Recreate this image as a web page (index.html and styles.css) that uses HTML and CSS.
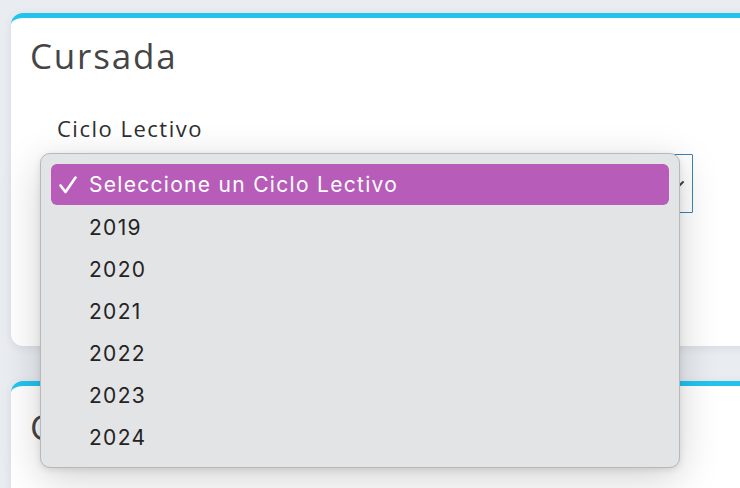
FILE: index.html
```html
<!DOCTYPE html>
<html lang="es">
<head>
<meta charset="utf-8">
<title>Cursada</title>
<link rel="stylesheet" href="styles.css">
</head>
<body>
<div class="page">
  <section class="card card-first">
    <h2 class="card-title">Cursada</h2>
    <div class="form-group">
      <label class="form-label">Ciclo Lectivo</label>
      <div class="select">
        <span class="select-value">Seleccione un Ciclo Lectivo</span>
        <svg class="select-chevron" width="16" height="12" viewBox="0 0 16 12"><path d="M2 3 L8 9 L14 3" fill="none" stroke="#444" stroke-width="2" stroke-linecap="round"/></svg>
      </div>
    </div>
  </section>
  <section class="card card-second">
    <h2 class="card-title">Comisiones</h2>
  </section>
</div>

<div class="menu">
  <div class="menu-item selected">
    <svg class="check" width="20" height="20" viewBox="0 0 20 20"><path d="M2.5 10.5 L7.5 17 L17.5 2.5" fill="none" stroke="#fff" stroke-width="2.6" stroke-linecap="round" stroke-linejoin="round"/></svg>
    <span>Seleccione un Ciclo Lectivo</span>
  </div>
  <div class="menu-item"><span>2019</span></div>
  <div class="menu-item"><span>2020</span></div>
  <div class="menu-item"><span>2021</span></div>
  <div class="menu-item"><span>2022</span></div>
  <div class="menu-item"><span>2023</span></div>
  <div class="menu-item"><span>2024</span></div>
</div>
</body>
</html>
```

FILE: styles.css
```css
html, body {
  margin: 0;
  padding: 0;
  height: 100%;
  overflow: hidden;
}
body {
  background: #e9ecf1;
  font-family: "Open Sans", "Noto Sans", sans-serif;
  position: relative;
}
.page {
  padding: 13px 0 0 11px;
  display: flex;
  flex-direction: column;
  gap: 35px;
}
.card {
  background: #fff;
  border-top: 5px solid #22c4ee;
  border-radius: 12px;
  box-shadow: 0 2px 10px rgba(0, 0, 0, 0.08);
  width: 780px;
  box-sizing: border-box;
}
.card-first {
  height: 333px;
}
.card-second {
  height: 200px;
}
.card-title {
  margin: 0;
  padding: 16px 0 0 19px;
  font-family: "Open Sans", sans-serif;
  font-weight: 400;
  font-size: 35px;
  line-height: 44px;
  color: #454545;
  letter-spacing: 1.8px;
}
.card-second .card-title {
  padding-top: 19px;
}
.form-group {
  padding: 35px 0 0 46px;
}
.form-label {
  display: block;
  font-family: "Open Sans", sans-serif;
  font-weight: 500;
  font-size: 22px;
  line-height: 30px;
  letter-spacing: 1.5px;
  color: #2e2e2e;
}
.select {
  margin-top: 11px;
  width: 636px;
  height: 59px;
  box-sizing: border-box;
  border: 1px solid #3b82b8;
  border-radius: 1px;
  display: flex;
  align-items: center;
  justify-content: space-between;
  padding: 0 6px 0 16px;
  color: #444;
  font-size: 18px;
}
.select-chevron {
  display: block;
  margin-right: 1px;
  margin-top: 2px;
}
.menu {
  position: absolute;
  left: 40px;
  top: 153px;
  width: 640px;
  height: 315px;
  box-sizing: border-box;
  background: #e3e4e6;
  border: 1px solid #b8b8ba;
  border-radius: 10px;
  box-shadow: 0 10px 40px rgba(0, 0, 0, 0.18), 0 2px 6px rgba(0, 0, 0, 0.1);
  padding: 10px 10px;
  display: flex;
  flex-direction: column;
}
.menu-item {
  height: 42px;
  flex: none;
  display: flex;
  align-items: center;
  padding-left: 38px;
  font-family: "Inter", "Liberation Sans", sans-serif;
  font-size: 21px;
  letter-spacing: 1.3px;
  color: #232323;
  border-radius: 6px;
  position: relative;
}
.menu-item.selected {
  background: #b75cb9;
  color: #fff;
  height: 41px;
  margin-bottom: 1px;
}
.check {
  position: absolute;
  left: 7px;
  top: 11px;
}
```
